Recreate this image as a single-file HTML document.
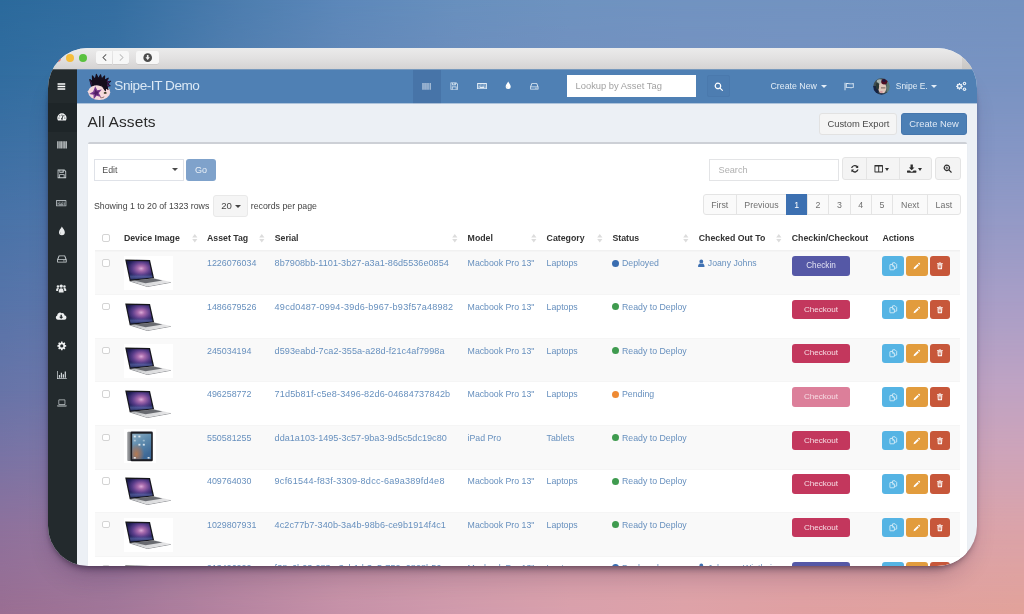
<!DOCTYPE html>
<html><head><meta charset="utf-8"><title>Snipe-IT Demo</title>
<style>
html,body{margin:0;padding:0}
body{width:1024px;height:614px;overflow:hidden;position:relative;font-family:"Liberation Sans",sans-serif;
background:#7f90c0;}
.bg{position:absolute;left:0;top:0;width:1024px;height:614px}
#shadow{position:absolute;left:49px;top:60px;width:926px;height:505px;border-radius:40px;box-shadow:0 5px 7px -1px rgba(20,10,30,.40),0 1px 4px rgba(20,10,40,.22),0 15px 24px -4px rgba(40,15,60,.20);}
#win{position:absolute;left:48px;top:48px;width:929px;height:518px;border-radius:40px;overflow:hidden;background:#ecf0f5;will-change:transform;}
.b{position:absolute;box-sizing:border-box}
.t{position:absolute;white-space:nowrap;line-height:14px;height:14px}
.t.c{text-align:center}
.ic{position:absolute;fill:currentColor;overflow:visible}
</style></head><body>
<div class="bg" style="background:linear-gradient(90deg,#2b6a9c 0.00%,#346ea1 11.13%,#4b7cae 22.27%,#5c88ba 33.40%,#6890be 44.53%,#6e93c0 55.66%,#7193c1 66.80%,#7293c1 78.12%,#7492c0 100.00%);"></div>
<div class="bg" style="background:linear-gradient(90deg,#316da0 0.00%,#3a72a4 11.13%,#527fb0 22.27%,#6388b8 33.40%,#6d8dbd 44.53%,#7390c0 55.66%,#7692c1 66.80%,#7793c2 78.12%,#7893c2 100.00%);-webkit-mask-image:linear-gradient(180deg,transparent 0px,#000 75px);mask-image:linear-gradient(180deg,transparent 0px,#000 75px);"></div>
<div class="bg" style="background:linear-gradient(90deg,#3d70a4 0.00%,#4675a8 11.13%,#5f82b4 22.27%,#6f8bbb 33.40%,#7a90c0 44.53%,#8093c3 55.66%,#8395c4 66.80%,#8496c5 78.12%,#8596c5 100.00%);-webkit-mask-image:linear-gradient(180deg,transparent 75px,#000 150px);mask-image:linear-gradient(180deg,transparent 75px,#000 150px);"></div>
<div class="bg" style="background:linear-gradient(90deg,#4a73a8 0.00%,#5478ac 11.13%,#6d85b6 22.27%,#7e8ebd 33.40%,#8a94c2 44.53%,#9097c4 55.66%,#9399c5 66.80%,#949ac6 78.12%,#959ac6 100.00%);-webkit-mask-image:linear-gradient(180deg,transparent 150px,#000 225px);mask-image:linear-gradient(180deg,transparent 150px,#000 225px);"></div>
<div class="bg" style="background:linear-gradient(90deg,#5674a9 0.00%,#6179ad 11.13%,#7d88b7 22.27%,#8f91be 33.40%,#9c98c2 44.53%,#a29bc5 55.66%,#a69dc6 66.80%,#a79ec7 78.12%,#a89ec7 100.00%);-webkit-mask-image:linear-gradient(180deg,transparent 225px,#000 300px);mask-image:linear-gradient(180deg,transparent 225px,#000 300px);"></div>
<div class="bg" style="background:linear-gradient(90deg,#6774a8 0.00%,#737aac 11.13%,#918ab5 22.27%,#a595bb 33.40%,#b39cbf 44.53%,#baa0c1 55.66%,#bda2c2 66.80%,#bfa3c3 78.12%,#c0a3c3 100.00%);-webkit-mask-image:linear-gradient(180deg,transparent 300px,#000 390px);mask-image:linear-gradient(180deg,transparent 300px,#000 390px);"></div>
<div class="bg" style="background:linear-gradient(90deg,#7a73a4 0.00%,#8579a7 11.13%,#a28aad 22.27%,#b695b2 33.40%,#c29db5 44.53%,#c9a1b7 55.66%,#cca3b7 66.80%,#cea4b8 78.12%,#cfa4b8 100.00%);-webkit-mask-image:linear-gradient(180deg,transparent 390px,#000 460px);mask-image:linear-gradient(180deg,transparent 390px,#000 460px);"></div>
<div class="bg" style="background:linear-gradient(90deg,#8e719c 0.00%,#98789e 11.13%,#b288a2 22.27%,#c494a5 33.40%,#cf9ca7 44.53%,#d6a0a8 55.66%,#d9a2a9 66.80%,#daa2a9 78.12%,#dba3a9 100.00%);-webkit-mask-image:linear-gradient(180deg,transparent 460px,#000 530px);mask-image:linear-gradient(180deg,transparent 460px,#000 530px);"></div>
<div class="bg" style="background:linear-gradient(90deg,#9a6e92 0.00%,#a27698 11.13%,#b583a0 22.27%,#c691a8 33.40%,#d09aac 44.53%,#d9a0ac 55.66%,#dea2a8 66.80%,#e0a0a2 78.12%,#e2a29a 100.00%);-webkit-mask-image:linear-gradient(180deg,transparent 530px,#000 614px);mask-image:linear-gradient(180deg,transparent 530px,#000 614px);"></div>
<div id="shadow"></div>
<div id="win">
<div class="b" style="left:0px;top:-1px;width:929.00px;height:22.00px;background:linear-gradient(180deg,#ececec 0%,#e2e1e1 50%,#d5d3d3 100%);"></div>
<div class="b" style="left:913.5px;top:-1px;width:15.50px;height:22.00px;background:linear-gradient(180deg,#dddcdb,#c9c7c5);"></div>
<div class="b" style="left:4.6px;top:5.5px;width:8.00px;height:8.00px;background:#f25e57;border-radius:50%;"></div>
<div class="b" style="left:18.4px;top:5.5px;width:8.00px;height:8.00px;background:#f5bd3b;border-radius:50%;"></div>
<div class="b" style="left:31.4px;top:5.5px;width:8.00px;height:8.00px;background:#5ac23f;border-radius:50%;"></div>
<div class="b" style="left:48px;top:3px;width:16.30px;height:13.00px;background:#f7f7f7;border-radius:2px 0 0 2px;box-shadow:0 .5px 0 rgba(0,0,0,.12);"></div>
<div class="b" style="left:65px;top:3px;width:15.50px;height:13.00px;background:#f7f7f7;border-radius:0 2px 2px 0;box-shadow:0 .5px 0 rgba(0,0,0,.12);"></div>
<div class="b" style="left:87.5px;top:3px;width:23.30px;height:13.00px;background:#f7f7f7;border-radius:2px;box-shadow:0 .5px 0 rgba(0,0,0,.12);"></div>
<svg class="ic" viewBox="0 0 10 10" style="left:52.5px;top:5px;width:8px;height:9px"><path d="M6.500 1 2.500 5l4 4" fill="none" stroke="#5e5e5e" stroke-width="1.300"/></svg>
<svg class="ic" viewBox="0 0 10 10" style="left:69px;top:5px;width:8px;height:9px"><path d="M3.500 1l4 4-4 4" fill="none" stroke="#c0c0c0" stroke-width="1.300"/></svg>
<svg class="ic" viewBox="0 0 16 16" style="left:94.70px;top:4.80px;width:9.4px;height:9.4px;color:#4c4c4c;"><circle cx="8" cy="8" r="7.400"/><path d="M6.600 3.400h2.800v4h2.400L8 11.800 4.200 7.400h2.400z" fill="#f4f4f4"/></svg>
<div class="b" style="left:0px;top:21px;width:29.20px;height:497.00px;background:#232a2d;"></div>
<div class="b" style="left:0px;top:21px;width:29.20px;height:1.00px;background:#585c5e;"></div>
<div class="b" style="left:0px;top:55px;width:29.20px;height:28.50px;background:#1e2528;"></div>
<svg class="ic" viewBox="0 0 16 16" style="left:8.50px;top:34.00px;width:8.8px;height:8.8px;color:#ffffff;"><path d="M1 2.5h14v2.6H1zM1 6.9h14v2.6H1zM1 11.3h14v2.6H1z"/></svg>
<svg class="ic" viewBox="0 0 16 16" style="left:8.60px;top:64.40px;width:9.8px;height:9.8px;color:#f2f4f5;"><path d="M8 2.2A7.6 7.6 0 0 0 .4 9.8c0 1.5.4 2.9 1.2 4.1h12.8a7.6 7.6 0 0 0 1.2-4.1A7.6 7.6 0 0 0 8 2.2zM8 4a1 1 0 1 1 0 2 1 1 0 0 1 0-2zM3.2 10.8a1 1 0 1 1 0-2 1 1 0 0 1 0 2zm1.4-3.6a1 1 0 1 1 0-2 1 1 0 0 1 0 2zm4.6 4.9a1.5 1.5 0 0 1-2.6-.9c0-.6.4-1.200 1-1.4l1.900-4.300.9.300-1.300 4.500c.4.500.5 1.200.1 1.800zm2.200-4.900a1 1 0 1 1 0-2 1 1 0 0 1 0 2zm1.400 3.600a1 1 0 1 1 0-2 1 1 0 0 1 0 2z"/></svg>
<svg class="ic" viewBox="0 0 16 16" style="left:8.60px;top:91.90px;width:9.8px;height:9.8px;color:#d5dadc;"><path d="M0 2h1.200v12H0zM1.800 2h.6v12h-.6zM3 2h1.200v12H3zM4.800 2h.6v12h-.6zM6 2h1.800v12H6zM8.400 2h.6v12h-.6zM9.600 2h1.200v12H9.600zM11.400 2h1.200v12h-1.200zM13.200 2h.6v12h-.6zM14.400 2H16v12h-1.600z"/></svg>
<svg class="ic" viewBox="0 0 16 16" style="left:8.60px;top:120.90px;width:9.8px;height:9.8px;color:#cbd1d4;"><path d="M1.500 1h10.800L15 3.700v10.800c0 .3-.2.500-.5.500h-13a.5.500 0 0 1-.5-.5v-13c0-.3.200-.5.500-.5zM2.400 2.400v11.200h1.200V8.600h8.800v5h1.200V4.300l-1.900-1.900h-.7v3.800H4V2.400zM5.400 2.400v2.400h4.200V2.400zM7.600 2.800h1.400v1.600H7.600zM5 10v3.600h6V10z" fill-rule="evenodd"/></svg>
<svg class="ic" viewBox="0 0 16 16" style="left:8.30px;top:149.50px;width:10.4px;height:10.4px;color:#aeb5b9;"><path d="M1 3.200h14c.6 0 1 .4 1 1v7.600c0 .6-.4 1-1 1H1c-.6 0-1-.4-1-1V4.200c0-.6.400-1 1-1zm.4 1.400v6.800h13.200V4.600zM2.400 5.600h1.400v1.300H2.400zm2.300 0h1.400v1.300H4.700zm2.300 0h1.400v1.300H7zm2.300 0h1.400v1.300H9.300zm2.300 0h2v1.300h-2zM2.400 7.700h2v1.300h-2zm2.900 0h1.400v1.300H5.300zm2.300 0H9v1.300H7.600zm2.300 0h1.400v1.300H9.900zm2.300 0h1.400v1.300h-1.400zM2.400 9.700h1.400V11H2.400zm2.300 0h6.600V11H4.700zm7.500 0h1.400V11h-1.400z" fill-rule="evenodd"/></svg>
<svg class="ic" viewBox="0 0 16 16" style="left:8.60px;top:177.70px;width:9.8px;height:9.8px;color:#e6e9ea;"><path d="M8 .8C6.500 4 3.200 6.800 3.200 10.400a4.800 4.800 0 0 0 9.600 0C12.800 6.800 9.500 4 8 .8z"/><path d="M6.900 13.300c-1.100-.2-1.900-1.200-1.900-2.400 0-.5.200-1 .4-1.400.4.700 1.300 1.500 1.500 3.800z" fill="#000" opacity=".18"/></svg>
<svg class="ic" viewBox="0 0 16 16" style="left:8.60px;top:206.40px;width:9.8px;height:9.8px;color:#c9cfd2;"><path d="M3.600 2.400h8.800c.5 0 .9.300 1.100.7L15.800 9v4c0 .600-.4 1-1 1H1.200c-.6 0-1-.4-1-1V9l2.300-5.900c.2-.400.600-.700 1.100-.700zM4 3.800 2.100 8.600h11.800L12 3.800zM1.600 10v2.600h12.800V10zm8.400.700h1.300v1.200H10zm2.100 0h1.300v1.200h-1.300z" fill-rule="evenodd"/></svg>
<svg class="ic" viewBox="0 0 16 16" style="left:8.30px;top:235.10px;width:10.4px;height:10.4px;color:#e6e9ea;"><path d="M8 2.200a2.600 2.600 0 1 1 0 5.200 2.600 2.600 0 0 1 0-5.200zM3 3.400a2 2 0 1 1 0 4 2 2 0 0 1 0-4zm10 0a2 2 0 1 1 0 4 2 2 0 0 1 0-4zM4.200 13.800c0-3.200 1-5.600 3.800-5.600s3.800 2.400 3.800 5.600c0 .5-.4.800-.8.800H5c-.4 0-.8-.3-.8-.8zM.2 11.200C.2 9.200 1 7.800 3 7.800c.6 0 1.100.2 1.500.4-.9 1-1.300 2.600-1.300 4.200H1c-.4 0-.8-.3-.8-.8zm15.600 0c0-2-.8-3.400-2.800-3.400-.6 0-1.100.2-1.500.4.900 1 1.300 2.600 1.300 4.200H15c.4 0 .8-.3.8-.8z"/></svg>
<svg class="ic" viewBox="0 0 16 16" style="left:8.30px;top:263.20px;width:10.4px;height:10.4px;color:#eef0f1;"><path d="M13 6.600A3.200 3.200 0 0 0 8.700 3.400 4.200 4.200 0 0 0 1.900 7 3.300 3.300 0 0 0 3.300 13.400h9.200a3.400 3.400 0 0 0 .5-6.800zM10.900 9.200 8.300 11.800c-.2.200-.4.200-.6 0L5.100 9.200c-.2-.2-.1-.5.200-.5h1.600V6.200c0-.2.200-.3.300-.3h1.600c.2 0 .3.100.3.300v2.500h1.600c.3 0 .4.300.2.500z"/></svg>
<svg class="ic" viewBox="0 0 16 16" style="left:8.60px;top:292.70px;width:9.8px;height:9.8px;color:#eef0f1;"><path d="M15 9.200V6.800l-1.900-.3a5.300 5.300 0 0 0-.5-1.200l1.100-1.500-1.700-1.700-1.500 1.100c-.4-.2-.8-.4-1.200-.5L9 .8H6.600l-.3 1.900c-.4.100-.8.300-1.200.5L3.600 2.100 1.900 3.800 3 5.300c-.2.400-.4.800-.5 1.200L.6 6.800v2.400l1.900.3c.1.400.3.800.5 1.200l-1.100 1.500 1.700 1.700 1.500-1.100c.4.200.8.400 1.200.5l.3 1.900H9l.3-1.900c.4-.1.800-.3 1.200-.5l1.500 1.100 1.700-1.700-1.100-1.500c.2-.4.400-.8.500-1.200zM7.800 10.600a2.600 2.600 0 1 1 0-5.200 2.600 2.600 0 0 1 0 5.200z"/></svg>
<svg class="ic" viewBox="0 0 16 16" style="left:8.60px;top:321.50px;width:9.8px;height:9.8px;color:#cfd5d8;"><path d="M0 1.500h1.200v12H16v1.200H0zM3 8h2v4.600H3zm3.200-3.400h2v8h-2zM9.400 7h2v5.600h-2zm3.200-4.400h2v10h-2z"/></svg>
<svg class="ic" viewBox="0 0 16 16" style="left:8.60px;top:349.60px;width:9.8px;height:9.8px;color:#c3c9cc;"><path d="M3.400 2.600h9.200c.6 0 1 .4 1 1v6.800c0 .6-.4 1-1 1H3.400c-.6 0-1-.4-1-1V3.600c0-.6.400-1 1-1zm.2 1.200v6.400h8.800V3.800zM0 12.200h16v.6c0 .500-.6.900-1.200.9H1.200c-.6 0-1.200-.4-1.200-.9z" fill-rule="evenodd"/></svg>
<div class="b" style="left:29.2px;top:21px;width:899.80px;height:34.00px;background:#4f80b4;"></div>
<div class="b" style="left:29.2px;top:21px;width:899.80px;height:1.00px;background:#7799bd;"></div>
<div class="b" style="left:29.2px;top:55px;width:899.80px;height:1.00px;background:#adc3db;"></div>
<div class="b" style="left:365px;top:22px;width:28.30px;height:33.00px;background:#4774a8;"></div>
<div class="b" style="left:365px;top:55px;width:28.30px;height:1.00px;background:#aabed6;"></div>
<svg viewBox="0 0 26 28" style="position:absolute;left:38.000px;top:24.500px;width:26px;height:28px;overflow:visible"><defs><filter id="gf" x="-10%" y="-10%" width="120%" height="120%"><feGaussianBlur stdDeviation="0.3"/></filter></defs><g filter="url(#gf)"><ellipse cx="13.200" cy="19.200" rx="11" ry="7.900" fill="#f6d9dc"/><path d="M1.200 18.600 3.600 16.800 4.200 20.200z" fill="#f6d9dc"/><path d="M5.500 13 3.800 6.500 6.600 8.600 6.400 2.800 9.200 6.600 10.400 1.400 12.400 5.800 14.600 1.800 15.600 6.200 18.600 3 18.400 7.200 22.200 5.200 20.600 8.800 24.600 8.200 21.600 11 24 12.800 21 13.200 22 16.400 19.600 14.800 19.400 17.600 16.400 13.200C13 11.200 9 11.200 5.500 13z" fill="#140c1c" stroke="#140c1c" stroke-width="1.100" stroke-linejoin="round"/><path d="M5.500 13 3.800 6.500 5.600 9.800zM22.200 5.200l-1.600 3.600 4-.6-3 2.800 2.400 1.800-3 .4z" fill="#5b2a78" opacity=".75"/><path d="M9.200 13.200 11.300 17.200 15.800 16.600 12.800 20.100 15 24 10.600 22.700 7.700 26.200 7.500 21.800 3.200 20.900 7.200 18.500z" fill="#7b3a8f"/><path d="M9.500 16.300 10.700 18.600 13.100 18.400 11.600 20.200 12.600 22.100 10.400 21.500 9 23.300 8.900 21.100 6.700 20.600 8.700 19.400z" fill="#4f1f63"/><ellipse cx="19.200" cy="19.900" rx="1.500" ry=".9" fill="#39361f"/><path d="M14.200 24.600c1.500.4 3-.1 4-.9" stroke="#5a3a3a" stroke-width=".7" fill="none"/></g></svg>

<span class="t " style="left:66.3px;top:31.20px;font-size:13.6px;color:#dbe8f5;font-weight:400;letter-spacing:-0.462px;">Snipe-IT Demo</span>
<svg class="ic" viewBox="0 0 16 16" style="left:374.40px;top:33.70px;width:8.8px;height:8.8px;color:#b9cbe0;"><path d="M0 2h1.200v12H0zM1.800 2h.6v12h-.6zM3 2h1.200v12H3zM4.800 2h.6v12h-.6zM6 2h1.800v12H6zM8.400 2h.6v12h-.6zM9.600 2h1.200v12H9.600zM11.400 2h1.200v12h-1.200zM13.200 2h.6v12h-.6zM14.400 2H16v12h-1.600z"/></svg>
<svg class="ic" viewBox="0 0 16 16" style="left:402.10px;top:34.00px;width:8.4px;height:8.4px;color:#e4edf6;"><path d="M1.500 1h10.800L15 3.700v10.800c0 .3-.2.500-.5.500h-13a.5.500 0 0 1-.5-.5v-13c0-.3.200-.5.500-.5zM2.400 2.400v11.200h1.200V8.600h8.800v5h1.200V4.300l-1.900-1.900h-.7v3.800H4V2.400zM5.400 2.400v2.400h4.200V2.400zM7.600 2.800h1.400v1.600H7.600zM5 10v3.600h6V10z" fill-rule="evenodd"/></svg>
<svg class="ic" viewBox="0 0 16 16" style="left:429.10px;top:33.30px;width:10px;height:10px;color:#e4edf6;"><path d="M1 3.200h14c.6 0 1 .4 1 1v7.600c0 .6-.4 1-1 1H1c-.6 0-1-.4-1-1V4.200c0-.6.400-1 1-1zm.4 1.400v6.800h13.200V4.600zM2.400 5.600h1.400v1.300H2.400zm2.300 0h1.400v1.300H4.700zm2.300 0h1.400v1.300H7zm2.300 0h1.400v1.300H9.300zm2.300 0h2v1.300h-2zM2.400 7.700h2v1.300h-2zm2.900 0h1.400v1.300H5.300zm2.300 0H9v1.300H7.600zm2.300 0h1.400v1.300H9.900zm2.300 0h1.400v1.300h-1.400zM2.400 9.700h1.400V11H2.400zm2.300 0h6.600V11H4.700zm7.500 0h1.400V11h-1.400z" fill-rule="evenodd"/></svg>
<svg class="ic" viewBox="0 0 16 16" style="left:456.30px;top:33.40px;width:8.4px;height:8.4px;color:#ffffff;"><path d="M8 .8C6.500 4 3.200 6.800 3.200 10.400a4.800 4.800 0 0 0 9.600 0C12.800 6.800 9.500 4 8 .8z"/><path d="M6.900 13.300c-1.100-.2-1.900-1.200-1.900-2.400 0-.5.200-1 .4-1.400.4.700 1.300 1.500 1.500 3.800z" fill="#000" opacity=".18"/></svg>
<svg class="ic" viewBox="0 0 16 16" style="left:481.70px;top:33.90px;width:8.6px;height:8.6px;color:#e4edf6;"><path d="M3.600 2.400h8.800c.5 0 .9.300 1.100.7L15.800 9v4c0 .600-.4 1-1 1H1.200c-.6 0-1-.4-1-1V9l2.300-5.900c.2-.400.600-.700 1.100-.700zM4 3.800 2.100 8.600h11.800L12 3.800zM1.600 10v2.600h12.800V10zm8.400.700h1.300v1.200H10zm2.100 0h1.300v1.200h-1.300z" fill-rule="evenodd"/></svg>
<div class="b" style="left:519px;top:27.3px;width:128.80px;height:21.50px;background:#fff;"></div>
<span class="t " style="left:527.5px;top:31.20px;font-size:9.4px;color:#a2a2a2;font-weight:400;">Lookup by Asset Tag</span>
<div class="b" style="left:659.4px;top:27.3px;width:23.00px;height:21.50px;background:#4d7db1;border:1px solid #4a79ad;border-radius:2px;"></div>
<svg class="ic" viewBox="0 0 16 16" style="left:666.10px;top:33.50px;width:9.6px;height:9.6px;color:#ffffff;"><path d="M6.600 1a5.600 5.600 0 0 1 4.600 8.800l3.500 3.500c.4.400.4 1 0 1.400-.4.400-1 .4-1.400 0l-3.500-3.500A5.600 5.600 0 1 1 6.600 1zm0 2a3.600 3.600 0 1 0 0 7.200 3.600 3.600 0 0 0 0-7.200z" fill-rule="evenodd"/></svg>
<span class="t " style="left:722.5px;top:31.20px;font-size:8.8px;color:#e3edf7;font-weight:400;">Create New</span>
<div class="b" style="left:772.6px;top:37.1px;border:3.200px solid transparent;border-top:3.600px solid #e3edf7;"></div>
<svg class="ic" viewBox="0 0 16 16" style="left:795.75px;top:33.35px;width:10.5px;height:10.5px;color:#dfeaf5;"><path d="M.8 2.600h1.500v11.400H.8zM2.900 3.600c3.500-1.500 6 1.400 11.900-.4v7.200c-5.900 1.800-8.400-1.100-11.900.4zm1.300 1v4.600c3-.8 5.600 1 9.300.3V4.900c-3.700.7-6.300-1.100-9.300-.3z" fill-rule="evenodd"/></svg>
<svg viewBox="0 0 17 17" style="position:absolute;left:824.700px;top:29.600px;width:17px;height:17px"><defs><clipPath id="ac"><circle cx="8.500" cy="8.500" r="8.300"/></clipPath><filter id="af" x="-10%" y="-10%" width="120%" height="120%"><feGaussianBlur stdDeviation="0.600"/></filter></defs><g clip-path="url(#ac)"><g filter="url(#af)"><rect x="-2" y="-2" width="21" height="21" fill="#3f4d4f"/><rect x="-1" y="8" width="6.500" height="11" fill="#182440"/><rect x="13.500" y="4" width="6" height="10" fill="#5f7a76"/><ellipse cx="6.800" cy="3.600" rx="3" ry="2.400" fill="#aab6b2"/><ellipse cx="9.300" cy="10" rx="4" ry="5.600" fill="#dfc6ba"/><ellipse cx="11.200" cy="3.800" rx="3" ry="2.700" fill="#4d0f22"/><ellipse cx="11" cy="2.600" rx="1.700" ry="1.400" fill="#1a1640"/><ellipse cx="8.200" cy="14" rx="1.700" ry="1.100" fill="#d79aa0"/><rect x="8" y="9.400" width="4.400" height="1" fill="#5f524b" opacity=".85"/><ellipse cx="9" cy="17" rx="5.500" ry="1.800" fill="#1c2a48"/><ellipse cx="4.500" cy="8" rx="1.600" ry="3.500" fill="#2c3836"/></g></g></svg>

<span class="t " style="left:847.8px;top:31.20px;font-size:8.45px;color:#e3edf7;font-weight:400;">Snipe E.</span>
<div class="b" style="left:883.3px;top:37.1px;border:3.200px solid transparent;border-top:3.600px solid #e3edf7;"></div>
<svg class="ic" viewBox="0 0 16 16" style="left:908.30px;top:32.90px;width:10.6px;height:10.6px;color:#eef3f9;"><path d="M10.200 8.900V7.300l-1.300-.2c-.1-.3-.2-.600-.4-.900l.8-1-1.200-1.200-1 .8c-.3-.2-.6-.3-.9-.4L6 3.100H4.400l-.2 1.300c-.3.100-.6.200-.9.400l-1-.8L1.100 5.200l.8 1c-.2.300-.3.600-.4.900L.2 7.300v1.600l1.300.2c.1.300.2.600.4.900l-.8 1 1.200 1.200 1-.8c.3.200.6.300.9.400l.2 1.300H6l.2-1.300c.3-.1.600-.2.900-.4l1 .8 1.200-1.200-.8-1c.2-.3.300-.6.400-.9zM5.200 10a1.900 1.900 0 1 1 0-3.800 1.900 1.900 0 0 1 0 3.800z"/><circle cx="12.800" cy="3.800" r="2.600"/><circle cx="12.800" cy="3.800" r="1" fill="#4f80b4"/><circle cx="12.800" cy="12.400" r="2.600"/><circle cx="12.800" cy="12.400" r="1" fill="#4f80b4"/></svg>
<span class="t " style="left:39.6px;top:66.90px;font-size:15.5px;color:#2a2a2a;font-weight:400;letter-spacing:0.081px;">All Assets</span>
<div class="b" style="left:771.4px;top:65.2px;width:78.10px;height:21.60px;background:#f5f5f5;border:1px solid #e2e2e2;border-radius:3px;"></div>
<span class="t c" style="left:771.4px;width:78.10px;top:69.00px;font-size:9.4px;color:#4a4a4a;font-weight:400;">Custom Export</span>
<div class="b" style="left:852.9px;top:65.2px;width:66.30px;height:21.60px;background:#4b7fb5;border:1px solid #4677ad;border-radius:3px;"></div>
<span class="t c" style="left:852.9px;width:66.30px;top:69.00px;font-size:9.4px;color:#dfe9f5;font-weight:400;">Create New</span>
<div class="b" style="left:40px;top:94.3px;width:879.00px;height:457.70px;background:#fff;border-top:2.200px solid #cdd0d6;border-radius:2px 2px 0 0;box-shadow:0 1px 1px rgba(0,0,0,.1);"></div>
<div class="b" style="left:46px;top:111.3px;width:90.00px;height:21.30px;background:#fff;border:1px solid #dfe2e8;"></div>
<span class="t " style="left:54.3px;top:115.00px;font-size:8.8px;color:#505050;font-weight:400;">Edit</span>
<div class="b" style="left:124.4px;top:120.4px;border:3px solid transparent;border-top:3.600px solid #4a4a4a;"></div>
<div class="b" style="left:138.3px;top:111.1px;width:29.30px;height:21.70px;background:#7fa2cb;border-radius:3px;"></div>
<span class="t c" style="left:138.6px;width:28.90px;top:115.00px;font-size:9px;color:#e9f0f8;font-weight:400;">Go</span>
<span class="t " style="left:46px;top:150.60px;font-size:8.75px;color:#444;font-weight:400;">Showing 1 to 20 of 1323 rows</span>
<div class="b" style="left:165px;top:147px;width:35.00px;height:21.80px;background:#f5f5f5;border:1px solid #e9e9e9;border-radius:3px;"></div>
<span class="t " style="left:173.2px;top:151.00px;font-size:9.6px;color:#444;font-weight:400;">20</span>
<div class="b" style="left:186.6px;top:156.9px;border:3.100px solid transparent;border-top:3.500px solid #444;"></div>
<span class="t " style="left:202.8px;top:150.60px;font-size:8.75px;color:#444;font-weight:400;">records per page</span>
<div class="b" style="left:661.3px;top:111.2px;width:130.00px;height:21.60px;background:#fff;border:1px solid #e3e4e6;"></div>
<span class="t " style="left:670.5px;top:115.00px;font-size:9.2px;color:#b0b0b0;font-weight:400;">Search</span>
<div class="b" style="left:794.4px;top:109.4px;width:89.20px;height:22.40px;background:#f4f4f4;border:1px solid #e4e4e4;border-radius:3px;"></div>
<div class="b" style="left:818.2px;top:109.4px;width:0.70px;height:22.40px;background:#e4e4e4;"></div>
<div class="b" style="left:850.7px;top:109.4px;width:0.70px;height:22.40px;background:#e4e4e4;"></div>
<svg class="ic" viewBox="0 0 16 16" style="left:801.80px;top:115.80px;width:9.6px;height:9.6px;color:#2f2f2f;"><path d="M13.700 2.300v4.400H9.300l1.700-1.700A4.300 4.300 0 0 0 3.900 6.700H1.700A6.400 6.400 0 0 1 12.500 3.500zM2.300 13.700V9.300h4.400L5 11a4.300 4.300 0 0 0 7.100-1.700h2.200A6.400 6.400 0 0 1 3.500 12.500z"/></svg>
<svg class="ic" viewBox="0 0 16 16" style="left:825.90px;top:115.90px;width:9.4px;height:9.4px;color:#2f2f2f;"><path d="M1.600 1.600h12.800c.5 0 .8.400.8.800v11.200c0 .5-.4.800-.8.800H1.600a.8.800 0 0 1-.8-.8V2.400c0-.5.400-.8.800-.8zm.8 2.800v8.400h4.800V4.400zm6.400 0v8.400h4.800V4.400z" fill-rule="evenodd"/></svg>
<div class="b" style="left:837.3px;top:119.5px;border:2.700px solid transparent;border-top:3.200px solid #333;"></div>
<svg class="ic" viewBox="0 0 16 16" style="left:858.60px;top:115.70px;width:9.4px;height:9.4px;color:#2f2f2f;"><path d="M6 1h4v5h2.800L8 10.800 3.200 6H6zM.8 11h4.100l1.600 1.600c.8.800 2.200.8 3 0L11.100 11h4.100c.4 0 .8.400.8.800v2.400c0 .4-.4.800-.8.800H.8a.8.800 0 0 1-.8-.8v-2.400c0-.4.400-.8.800-.8z"/></svg>
<div class="b" style="left:870px;top:119.5px;border:2.700px solid transparent;border-top:3.200px solid #333;"></div>
<div class="b" style="left:887.3px;top:109.4px;width:26.00px;height:22.40px;background:#f4f4f4;border:1px solid #e4e4e4;border-radius:3px;"></div>
<svg class="ic" viewBox="0 0 16 16" style="left:895.30px;top:115.90px;width:9.4px;height:9.4px;color:#2f2f2f;"><path d="M6.600 1a5.600 5.600 0 0 1 4.600 8.800l3.500 3.500c.4.400.4 1 0 1.400-.4.400-1 .4-1.400 0l-3.500-3.500A5.600 5.600 0 1 1 6.600 1zm0 2a3.600 3.600 0 1 0 0 7.200 3.600 3.600 0 0 0 0-7.200zM6 4.400h1.200V6h1.600v1.200H7.200v1.600H6V7.200H4.400V6H6z" fill-rule="evenodd"/></svg>
<div class="b" style="left:654.7px;top:145.8px;width:258.10px;height:21.30px;background:#fafafa;border:1px solid #e4e4e4;border-radius:3px;"></div>
<span class="t c" style="left:654.7px;width:34.00px;top:149.60px;font-size:8.8px;color:#707070;font-weight:400;">First</span>
<div class="b" style="left:688.35px;top:146px;width:0.70px;height:20.90px;background:#e4e4e4;"></div>
<span class="t c" style="left:688.7px;width:49.60px;top:149.60px;font-size:8.8px;color:#707070;font-weight:400;">Previous</span>
<div class="b" style="left:738.3px;top:146px;width:20.70px;height:20.90px;background:#3c70b1;"></div>
<span class="t c" style="left:738.3px;width:20.70px;top:149.60px;font-size:8.8px;color:#fff;font-weight:400;">1</span>
<div class="b" style="left:758.65px;top:146px;width:0.70px;height:20.90px;background:#e4e4e4;"></div>
<span class="t c" style="left:759px;width:21.80px;top:149.60px;font-size:8.8px;color:#707070;font-weight:400;">2</span>
<div class="b" style="left:780.45px;top:146px;width:0.70px;height:20.90px;background:#e4e4e4;"></div>
<span class="t c" style="left:780.8px;width:21.20px;top:149.60px;font-size:8.8px;color:#707070;font-weight:400;">3</span>
<div class="b" style="left:801.65px;top:146px;width:0.70px;height:20.90px;background:#e4e4e4;"></div>
<span class="t c" style="left:802px;width:21.30px;top:149.60px;font-size:8.8px;color:#707070;font-weight:400;">4</span>
<div class="b" style="left:822.95px;top:146px;width:0.70px;height:20.90px;background:#e4e4e4;"></div>
<span class="t c" style="left:823.3px;width:21.50px;top:149.60px;font-size:8.8px;color:#707070;font-weight:400;">5</span>
<div class="b" style="left:844.45px;top:146px;width:0.70px;height:20.90px;background:#e4e4e4;"></div>
<span class="t c" style="left:844.8px;width:34.60px;top:149.60px;font-size:8.8px;color:#707070;font-weight:400;">Next</span>
<div class="b" style="left:879.05px;top:146px;width:0.70px;height:20.90px;background:#e4e4e4;"></div>
<span class="t c" style="left:879.4px;width:33.10px;top:149.60px;font-size:8.8px;color:#707070;font-weight:400;">Last</span>
<div class="b" style="left:54px;top:186.3px;width:7.60px;height:7.70px;background:#fff;border:1px solid #d4d4d4;border-radius:2px;"></div>
<span class="t " style="left:75.9px;top:182.80px;font-size:8.75px;color:#333;font-weight:700;">Device Image</span>
<svg class="ic" viewBox="0 0 6 10" style="left:143.50px;top:184.50px;width:5.6px;height:10.4px;"><path d="M3 .4 5.800 4.200H.2zM3 9.600.2 5.800h5.600z" fill="#dcdcdc"/></svg>
<span class="t " style="left:159px;top:182.80px;font-size:8.75px;color:#333;font-weight:700;">Asset Tag</span>
<svg class="ic" viewBox="0 0 6 10" style="left:210.60px;top:184.50px;width:5.6px;height:10.4px;"><path d="M3 .4 5.800 4.200H.2zM3 9.600.2 5.800h5.600z" fill="#dcdcdc"/></svg>
<span class="t " style="left:226.7px;top:182.80px;font-size:8.75px;color:#333;font-weight:700;">Serial</span>
<svg class="ic" viewBox="0 0 6 10" style="left:404.20px;top:184.50px;width:5.6px;height:10.4px;"><path d="M3 .4 5.800 4.200H.2zM3 9.600.2 5.800h5.600z" fill="#dcdcdc"/></svg>
<span class="t " style="left:419.6px;top:182.80px;font-size:8.75px;color:#333;font-weight:700;">Model</span>
<svg class="ic" viewBox="0 0 6 10" style="left:483.20px;top:184.50px;width:5.6px;height:10.4px;"><path d="M3 .4 5.800 4.200H.2zM3 9.600.2 5.800h5.600z" fill="#dcdcdc"/></svg>
<span class="t " style="left:498.6px;top:182.80px;font-size:8.75px;color:#333;font-weight:700;">Category</span>
<svg class="ic" viewBox="0 0 6 10" style="left:549.00px;top:184.50px;width:5.6px;height:10.4px;"><path d="M3 .4 5.800 4.200H.2zM3 9.600.2 5.800h5.600z" fill="#dcdcdc"/></svg>
<span class="t " style="left:564.4px;top:182.80px;font-size:8.75px;color:#333;font-weight:700;">Status</span>
<svg class="ic" viewBox="0 0 6 10" style="left:635.40px;top:184.50px;width:5.6px;height:10.4px;"><path d="M3 .4 5.800 4.200H.2zM3 9.600.2 5.800h5.600z" fill="#dcdcdc"/></svg>
<span class="t " style="left:650.8px;top:182.80px;font-size:8.75px;color:#333;font-weight:700;">Checked Out To</span>
<svg class="ic" viewBox="0 0 6 10" style="left:727.70px;top:184.50px;width:5.6px;height:10.4px;"><path d="M3 .4 5.800 4.200H.2zM3 9.600.2 5.800h5.600z" fill="#dcdcdc"/></svg>
<span class="t " style="left:743.8px;top:182.80px;font-size:8.75px;color:#333;font-weight:700;">Checkin/Checkout</span>
<span class="t " style="left:834.4px;top:182.80px;font-size:8.75px;color:#333;font-weight:700;">Actions</span>
<div class="b" style="left:46.5px;top:202px;width:865.50px;height:1.00px;background:#f1f1f1;"></div>
<div class="b" style="left:46.5px;top:202.6px;width:865.50px;height:43.60px;background:#f9f9f9;"></div>
<div class="b" style="left:46.5px;top:202.6px;width:865.50px;height:0.70px;background:#f5f5f5;"></div>
<div class="b" style="left:54px;top:211.3px;width:7.60px;height:7.60px;background:#fff;border:1px solid #d4d4d4;border-radius:2px;"></div>
<div class="b" style="left:75.6px;top:208.3px;width:49px;height:34px;background:#fff"><svg viewBox="0 0 48.6 34" width="48.6" height="34" style="position:absolute;left:0;top:0;display:block"><defs><radialGradient id="lw" cx="0.56" cy="0.40" r="0.60"><stop offset="0" stop-color="#d9a9d6"/><stop offset="0.22" stop-color="#a96cae"/><stop offset="0.55" stop-color="#5d3f8c"/><stop offset="0.85" stop-color="#2b2562"/><stop offset="1" stop-color="#1a1a48"/></radialGradient><linearGradient id="lb" x1="0" y1="0" x2="1" y2="0.3"><stop offset="0" stop-color="#a2a4a8"/><stop offset="0.5" stop-color="#d6d7d9"/><stop offset="1" stop-color="#e6e6e7"/></linearGradient><linearGradient id="lg" x1="0" y1="0" x2="0" y2="1"><stop offset="0.7" stop-color="#4a6aa8" stop-opacity="0"/><stop offset="0.85" stop-color="#6b7fc0" stop-opacity="0.55"/><stop offset="1" stop-color="#3a4a80" stop-opacity="0.5"/></linearGradient><filter id="lf" x="-5%" y="-5%" width="110%" height="110%"><feGaussianBlur stdDeviation="0.38"/></filter></defs><g filter="url(#lf)"><path d="M5.700 25.500 23.400 31.100 46.800 26.800 46.800 26 23.300 30.200 5.700 24.600z" fill="#8d8f93"/><path d="M5.700 24.700 23.300 30.200 46.800 26 30.200 22.300z" fill="url(#lb)"/><path d="M10.500 24.500 29.600 22.500 38.500 24.500 21.500 27.300z" fill="#4e5056" opacity="0.8"/><path d="M1.200 3.600 26 3.900 30.100 22.300 5.700 24.900z" fill="#15151b"/><path d="M2.700 5.100 25 5.300 28.600 21.400 6.600 23.600z" fill="url(#lw)"/><path d="M2.700 5.100 25 5.300 28.600 21.400 6.600 23.600z" fill="url(#lg)"/></g></svg>
</div>
<span class="t " style="left:159px;top:208.30px;font-size:8.9px;color:#6790be;font-weight:400;">1226076034</span>
<span class="t " style="left:226.6px;top:208.30px;font-size:9.1px;color:#6790be;font-weight:400;letter-spacing:0.028px;">8b7908bb-1101-3b27-a3a1-86d5536e0854</span>
<span class="t " style="left:419.6px;top:208.30px;font-size:8.75px;color:#6790be;font-weight:400;">Macbook Pro 13&quot;</span>
<span class="t " style="left:498.6px;top:208.30px;font-size:8.75px;color:#6790be;font-weight:400;">Laptops</span>
<div class="b" style="left:564.3px;top:211.7px;width:7.00px;height:7.00px;background:#3a6db0;border-radius:50%;"></div>
<span class="t " style="left:574px;top:208.30px;font-size:8.75px;color:#6790be;font-weight:400;">Deployed</span>
<svg class="ic" viewBox="0 0 16 16" style="left:649.40px;top:210.60px;width:8.6px;height:8.6px;color:#3f71b2;"><path d="M8 1a3.600 3.600 0 1 1 0 7.200A3.600 3.600 0 0 1 8 1zM2 14.200c0-3.400 1.500-5.600 3.600-5.800.7.500 1.500.8 2.400.8s1.700-.3 2.400-.8c2.100.2 3.600 2.400 3.600 5.800 0 .5-.4.800-.8.800H2.800c-.4 0-.8-.3-.8-.8z"/></svg>
<span class="t " style="left:659.8px;top:208.30px;font-size:8.7px;color:#6790be;font-weight:400;">Joany Johns</span>
<div class="b" style="left:743.8px;top:208.3px;width:58.40px;height:19.60px;background:#5558a6;border-radius:3px;"></div>
<span class="t c" style="left:743.8px;width:58.40px;top:211.10px;font-size:8.2px;color:#e2e2f3;font-weight:400;">Checkin</span>
<div class="b" style="left:834px;top:208.3px;width:22.10px;height:19.60px;background:#55b4e4;border-radius:3px;"></div>
<svg class="ic" viewBox="0 0 16 16" style="left:840.75px;top:213.80px;width:8.6px;height:8.6px;color:#ffffff;"><g fill="none" stroke="currentColor" stroke-width="1.250" stroke-linejoin="round"><path d="M6.400 4V2.200c0-.4.300-.7.700-.7h4.200l3 3v6.300c0 .4-.3.700-.7.700H10"/><path d="M2.400 4.600h4.400l3.200 3.200v6c0 .4-.3.700-.7.700H2.400c-.4 0-.7-.3-.7-.7V5.300c0-.4.300-.7.700-.7z"/><path d="M6.600 4.800V8h3.200" stroke-width="1"/></g></svg>
<div class="b" style="left:858.3px;top:208.3px;width:21.30px;height:19.60px;background:#e29c3d;border-radius:3px;"></div>
<svg class="ic" viewBox="0 0 16 16" style="left:865.05px;top:214.20px;width:7.8px;height:7.8px;color:#ffffff;"><path d="M11.600 1.600c.4-.4 1-.4 1.400 0l1.400 1.400c.4.400.4 1 0 1.400L13 5.800 10.200 3zM9.300 3.900l2.800 2.800-7.300 7.300-3.600.8.800-3.600z"/></svg>
<div class="b" style="left:881.9px;top:208.3px;width:20.60px;height:19.60px;background:#c7573a;border-radius:3px;"></div>
<svg class="ic" viewBox="0 0 16 16" style="left:888.30px;top:214.20px;width:7.8px;height:7.8px;color:#ffffff;"><path d="M6 1h4l.6 1.200H14v1.600H2V2.200h3.400zM3 4.800h10l-.7 9.400c0 .5-.4.800-.9.800H4.600c-.5 0-.9-.3-.9-.8zm2.300 1.700.3 6.400h1.200l-.2-6.400zm2.100 0v6.400h1.200V6.500zm2.100 0-.2 6.400h1.200l.3-6.400z" fill-rule="evenodd"/></svg>
<div class="b" style="left:46.5px;top:246.2px;width:865.50px;height:0.70px;background:#f5f5f5;"></div>
<div class="b" style="left:54px;top:254.9px;width:7.60px;height:7.60px;background:#fff;border:1px solid #d4d4d4;border-radius:2px;"></div>
<div class="b" style="left:75.6px;top:251.9px;width:49px;height:34px;background:#fff"><svg viewBox="0 0 48.6 34" width="48.6" height="34" style="position:absolute;left:0;top:0;display:block"><defs><radialGradient id="lw" cx="0.56" cy="0.40" r="0.60"><stop offset="0" stop-color="#d9a9d6"/><stop offset="0.22" stop-color="#a96cae"/><stop offset="0.55" stop-color="#5d3f8c"/><stop offset="0.85" stop-color="#2b2562"/><stop offset="1" stop-color="#1a1a48"/></radialGradient><linearGradient id="lb" x1="0" y1="0" x2="1" y2="0.3"><stop offset="0" stop-color="#a2a4a8"/><stop offset="0.5" stop-color="#d6d7d9"/><stop offset="1" stop-color="#e6e6e7"/></linearGradient><linearGradient id="lg" x1="0" y1="0" x2="0" y2="1"><stop offset="0.7" stop-color="#4a6aa8" stop-opacity="0"/><stop offset="0.85" stop-color="#6b7fc0" stop-opacity="0.55"/><stop offset="1" stop-color="#3a4a80" stop-opacity="0.5"/></linearGradient><filter id="lf" x="-5%" y="-5%" width="110%" height="110%"><feGaussianBlur stdDeviation="0.38"/></filter></defs><g filter="url(#lf)"><path d="M5.700 25.500 23.400 31.100 46.800 26.800 46.800 26 23.300 30.200 5.700 24.600z" fill="#8d8f93"/><path d="M5.700 24.700 23.300 30.200 46.800 26 30.200 22.300z" fill="url(#lb)"/><path d="M10.500 24.500 29.600 22.500 38.500 24.500 21.500 27.300z" fill="#4e5056" opacity="0.8"/><path d="M1.200 3.600 26 3.900 30.100 22.300 5.700 24.900z" fill="#15151b"/><path d="M2.700 5.100 25 5.300 28.600 21.400 6.600 23.600z" fill="url(#lw)"/><path d="M2.700 5.100 25 5.300 28.600 21.400 6.600 23.600z" fill="url(#lg)"/></g></svg>
</div>
<span class="t " style="left:159px;top:251.90px;font-size:8.9px;color:#6790be;font-weight:400;">1486679526</span>
<span class="t " style="left:226.6px;top:251.90px;font-size:9.1px;color:#6790be;font-weight:400;letter-spacing:0.218px;">49cd0487-0994-39d6-b967-b93f57a48982</span>
<span class="t " style="left:419.6px;top:251.90px;font-size:8.75px;color:#6790be;font-weight:400;">Macbook Pro 13&quot;</span>
<span class="t " style="left:498.6px;top:251.90px;font-size:8.75px;color:#6790be;font-weight:400;">Laptops</span>
<div class="b" style="left:564.3px;top:255.3px;width:7.00px;height:7.00px;background:#3f9b4f;border-radius:50%;"></div>
<span class="t " style="left:574px;top:251.90px;font-size:8.75px;color:#6790be;font-weight:400;">Ready to Deploy</span>
<div class="b" style="left:743.8px;top:251.9px;width:58.40px;height:19.60px;background:#c3375d;border-radius:3px;"></div>
<span class="t c" style="left:743.8px;width:58.40px;top:254.70px;font-size:8.1px;color:#f6dbe3;font-weight:400;">Checkout</span>
<div class="b" style="left:834px;top:251.9px;width:22.10px;height:19.60px;background:#55b4e4;border-radius:3px;"></div>
<svg class="ic" viewBox="0 0 16 16" style="left:840.75px;top:257.40px;width:8.6px;height:8.6px;color:#ffffff;"><g fill="none" stroke="currentColor" stroke-width="1.250" stroke-linejoin="round"><path d="M6.400 4V2.200c0-.4.300-.7.700-.7h4.200l3 3v6.300c0 .4-.3.700-.7.700H10"/><path d="M2.400 4.600h4.400l3.200 3.200v6c0 .4-.3.700-.7.700H2.400c-.4 0-.7-.3-.7-.7V5.300c0-.4.300-.7.700-.7z"/><path d="M6.600 4.800V8h3.200" stroke-width="1"/></g></svg>
<div class="b" style="left:858.3px;top:251.9px;width:21.30px;height:19.60px;background:#e29c3d;border-radius:3px;"></div>
<svg class="ic" viewBox="0 0 16 16" style="left:865.05px;top:257.80px;width:7.8px;height:7.8px;color:#ffffff;"><path d="M11.600 1.600c.4-.4 1-.4 1.400 0l1.400 1.400c.4.400.4 1 0 1.400L13 5.800 10.200 3zM9.300 3.900l2.800 2.800-7.300 7.300-3.600.8.800-3.600z"/></svg>
<div class="b" style="left:881.9px;top:251.9px;width:20.60px;height:19.60px;background:#c7573a;border-radius:3px;"></div>
<svg class="ic" viewBox="0 0 16 16" style="left:888.30px;top:257.80px;width:7.8px;height:7.8px;color:#ffffff;"><path d="M6 1h4l.6 1.200H14v1.600H2V2.200h3.400zM3 4.800h10l-.7 9.400c0 .5-.4.800-.9.800H4.600c-.5 0-.9-.3-.9-.8zm2.300 1.700.3 6.400h1.200l-.2-6.400zm2.100 0v6.400h1.200V6.500zm2.100 0-.2 6.400h1.200l.3-6.400z" fill-rule="evenodd"/></svg>
<div class="b" style="left:46.5px;top:289.8px;width:865.50px;height:43.60px;background:#f9f9f9;"></div>
<div class="b" style="left:46.5px;top:289.8px;width:865.50px;height:0.70px;background:#f5f5f5;"></div>
<div class="b" style="left:54px;top:298.5px;width:7.60px;height:7.60px;background:#fff;border:1px solid #d4d4d4;border-radius:2px;"></div>
<div class="b" style="left:75.6px;top:295.5px;width:49px;height:34px;background:#fff"><svg viewBox="0 0 48.6 34" width="48.6" height="34" style="position:absolute;left:0;top:0;display:block"><defs><radialGradient id="lw" cx="0.56" cy="0.40" r="0.60"><stop offset="0" stop-color="#d9a9d6"/><stop offset="0.22" stop-color="#a96cae"/><stop offset="0.55" stop-color="#5d3f8c"/><stop offset="0.85" stop-color="#2b2562"/><stop offset="1" stop-color="#1a1a48"/></radialGradient><linearGradient id="lb" x1="0" y1="0" x2="1" y2="0.3"><stop offset="0" stop-color="#a2a4a8"/><stop offset="0.5" stop-color="#d6d7d9"/><stop offset="1" stop-color="#e6e6e7"/></linearGradient><linearGradient id="lg" x1="0" y1="0" x2="0" y2="1"><stop offset="0.7" stop-color="#4a6aa8" stop-opacity="0"/><stop offset="0.85" stop-color="#6b7fc0" stop-opacity="0.55"/><stop offset="1" stop-color="#3a4a80" stop-opacity="0.5"/></linearGradient><filter id="lf" x="-5%" y="-5%" width="110%" height="110%"><feGaussianBlur stdDeviation="0.38"/></filter></defs><g filter="url(#lf)"><path d="M5.700 25.500 23.400 31.100 46.800 26.800 46.800 26 23.300 30.200 5.700 24.600z" fill="#8d8f93"/><path d="M5.700 24.700 23.300 30.200 46.800 26 30.200 22.300z" fill="url(#lb)"/><path d="M10.500 24.500 29.600 22.500 38.500 24.500 21.500 27.300z" fill="#4e5056" opacity="0.8"/><path d="M1.200 3.600 26 3.900 30.100 22.300 5.700 24.900z" fill="#15151b"/><path d="M2.700 5.100 25 5.300 28.600 21.400 6.600 23.600z" fill="url(#lw)"/><path d="M2.700 5.100 25 5.300 28.600 21.400 6.600 23.600z" fill="url(#lg)"/></g></svg>
</div>
<span class="t " style="left:159px;top:295.50px;font-size:8.9px;color:#6790be;font-weight:400;">245034194</span>
<span class="t " style="left:226.6px;top:295.50px;font-size:9.1px;color:#6790be;font-weight:400;letter-spacing:0.059px;">d593eabd-7ca2-355a-a28d-f21c4af7998a</span>
<span class="t " style="left:419.6px;top:295.50px;font-size:8.75px;color:#6790be;font-weight:400;">Macbook Pro 13&quot;</span>
<span class="t " style="left:498.6px;top:295.50px;font-size:8.75px;color:#6790be;font-weight:400;">Laptops</span>
<div class="b" style="left:564.3px;top:298.9px;width:7.00px;height:7.00px;background:#3f9b4f;border-radius:50%;"></div>
<span class="t " style="left:574px;top:295.50px;font-size:8.75px;color:#6790be;font-weight:400;">Ready to Deploy</span>
<div class="b" style="left:743.8px;top:295.5px;width:58.40px;height:19.60px;background:#c3375d;border-radius:3px;"></div>
<span class="t c" style="left:743.8px;width:58.40px;top:298.30px;font-size:8.1px;color:#f6dbe3;font-weight:400;">Checkout</span>
<div class="b" style="left:834px;top:295.5px;width:22.10px;height:19.60px;background:#55b4e4;border-radius:3px;"></div>
<svg class="ic" viewBox="0 0 16 16" style="left:840.75px;top:301.00px;width:8.6px;height:8.6px;color:#ffffff;"><g fill="none" stroke="currentColor" stroke-width="1.250" stroke-linejoin="round"><path d="M6.400 4V2.200c0-.4.300-.7.700-.7h4.200l3 3v6.300c0 .4-.3.700-.7.700H10"/><path d="M2.400 4.600h4.400l3.200 3.200v6c0 .4-.3.700-.7.700H2.400c-.4 0-.7-.3-.7-.7V5.300c0-.4.300-.7.700-.7z"/><path d="M6.600 4.800V8h3.200" stroke-width="1"/></g></svg>
<div class="b" style="left:858.3px;top:295.5px;width:21.30px;height:19.60px;background:#e29c3d;border-radius:3px;"></div>
<svg class="ic" viewBox="0 0 16 16" style="left:865.05px;top:301.40px;width:7.8px;height:7.8px;color:#ffffff;"><path d="M11.600 1.600c.4-.4 1-.4 1.400 0l1.400 1.400c.4.400.4 1 0 1.400L13 5.800 10.200 3zM9.300 3.900l2.800 2.800-7.300 7.300-3.600.8.800-3.600z"/></svg>
<div class="b" style="left:881.9px;top:295.5px;width:20.60px;height:19.60px;background:#c7573a;border-radius:3px;"></div>
<svg class="ic" viewBox="0 0 16 16" style="left:888.30px;top:301.40px;width:7.8px;height:7.8px;color:#ffffff;"><path d="M6 1h4l.6 1.200H14v1.600H2V2.200h3.400zM3 4.800h10l-.7 9.400c0 .5-.4.800-.9.800H4.600c-.5 0-.9-.3-.9-.8zm2.300 1.700.3 6.400h1.200l-.2-6.400zm2.100 0v6.400h1.200V6.500zm2.100 0-.2 6.400h1.200l.3-6.400z" fill-rule="evenodd"/></svg>
<div class="b" style="left:46.5px;top:333.4px;width:865.50px;height:0.70px;background:#f5f5f5;"></div>
<div class="b" style="left:54px;top:342.1px;width:7.60px;height:7.60px;background:#fff;border:1px solid #d4d4d4;border-radius:2px;"></div>
<div class="b" style="left:75.6px;top:339.1px;width:49px;height:34px;background:#fff"><svg viewBox="0 0 48.6 34" width="48.6" height="34" style="position:absolute;left:0;top:0;display:block"><defs><radialGradient id="lw" cx="0.56" cy="0.40" r="0.60"><stop offset="0" stop-color="#d9a9d6"/><stop offset="0.22" stop-color="#a96cae"/><stop offset="0.55" stop-color="#5d3f8c"/><stop offset="0.85" stop-color="#2b2562"/><stop offset="1" stop-color="#1a1a48"/></radialGradient><linearGradient id="lb" x1="0" y1="0" x2="1" y2="0.3"><stop offset="0" stop-color="#a2a4a8"/><stop offset="0.5" stop-color="#d6d7d9"/><stop offset="1" stop-color="#e6e6e7"/></linearGradient><linearGradient id="lg" x1="0" y1="0" x2="0" y2="1"><stop offset="0.7" stop-color="#4a6aa8" stop-opacity="0"/><stop offset="0.85" stop-color="#6b7fc0" stop-opacity="0.55"/><stop offset="1" stop-color="#3a4a80" stop-opacity="0.5"/></linearGradient><filter id="lf" x="-5%" y="-5%" width="110%" height="110%"><feGaussianBlur stdDeviation="0.38"/></filter></defs><g filter="url(#lf)"><path d="M5.700 25.500 23.400 31.100 46.800 26.800 46.800 26 23.300 30.200 5.700 24.600z" fill="#8d8f93"/><path d="M5.700 24.700 23.300 30.200 46.800 26 30.200 22.300z" fill="url(#lb)"/><path d="M10.500 24.500 29.600 22.500 38.500 24.500 21.500 27.300z" fill="#4e5056" opacity="0.8"/><path d="M1.200 3.600 26 3.900 30.100 22.300 5.700 24.900z" fill="#15151b"/><path d="M2.700 5.100 25 5.300 28.600 21.400 6.600 23.600z" fill="url(#lw)"/><path d="M2.700 5.100 25 5.300 28.600 21.400 6.600 23.600z" fill="url(#lg)"/></g></svg>
</div>
<span class="t " style="left:159px;top:339.10px;font-size:8.9px;color:#6790be;font-weight:400;">496258772</span>
<span class="t " style="left:226.6px;top:339.10px;font-size:9.1px;color:#6790be;font-weight:400;letter-spacing:0.132px;">71d5b81f-c5e8-3496-82d6-04684737842b</span>
<span class="t " style="left:419.6px;top:339.10px;font-size:8.75px;color:#6790be;font-weight:400;">Macbook Pro 13&quot;</span>
<span class="t " style="left:498.6px;top:339.10px;font-size:8.75px;color:#6790be;font-weight:400;">Laptops</span>
<div class="b" style="left:564.3px;top:342.5px;width:7.00px;height:7.00px;background:#ee8a33;border-radius:50%;"></div>
<span class="t " style="left:574px;top:339.10px;font-size:8.75px;color:#6790be;font-weight:400;">Pending</span>
<div class="b" style="left:743.8px;top:339.1px;width:58.40px;height:19.60px;background:#dc7f9a;border-radius:3px;"></div>
<span class="t c" style="left:743.8px;width:58.40px;top:341.90px;font-size:8.1px;color:#f6dbe3;font-weight:400;">Checkout</span>
<div class="b" style="left:834px;top:339.1px;width:22.10px;height:19.60px;background:#55b4e4;border-radius:3px;"></div>
<svg class="ic" viewBox="0 0 16 16" style="left:840.75px;top:344.60px;width:8.6px;height:8.6px;color:#ffffff;"><g fill="none" stroke="currentColor" stroke-width="1.250" stroke-linejoin="round"><path d="M6.400 4V2.200c0-.4.300-.7.700-.7h4.200l3 3v6.300c0 .4-.3.700-.7.700H10"/><path d="M2.400 4.600h4.400l3.200 3.200v6c0 .4-.3.700-.7.700H2.400c-.4 0-.7-.3-.7-.7V5.300c0-.4.300-.7.700-.7z"/><path d="M6.600 4.800V8h3.200" stroke-width="1"/></g></svg>
<div class="b" style="left:858.3px;top:339.1px;width:21.30px;height:19.60px;background:#e29c3d;border-radius:3px;"></div>
<svg class="ic" viewBox="0 0 16 16" style="left:865.05px;top:345.00px;width:7.8px;height:7.8px;color:#ffffff;"><path d="M11.600 1.600c.4-.4 1-.4 1.400 0l1.400 1.400c.4.400.4 1 0 1.400L13 5.800 10.200 3zM9.300 3.900l2.800 2.800-7.300 7.300-3.600.8.800-3.600z"/></svg>
<div class="b" style="left:881.9px;top:339.1px;width:20.60px;height:19.60px;background:#c7573a;border-radius:3px;"></div>
<svg class="ic" viewBox="0 0 16 16" style="left:888.30px;top:345.00px;width:7.8px;height:7.8px;color:#ffffff;"><path d="M6 1h4l.6 1.200H14v1.600H2V2.200h3.400zM3 4.800h10l-.7 9.400c0 .5-.4.800-.9.800H4.600c-.5 0-.9-.3-.9-.8zm2.300 1.700.3 6.400h1.200l-.2-6.400zm2.100 0v6.400h1.200V6.500zm2.100 0-.2 6.400h1.200l.3-6.400z" fill-rule="evenodd"/></svg>
<div class="b" style="left:46.5px;top:377.0px;width:865.50px;height:43.60px;background:#f9f9f9;"></div>
<div class="b" style="left:46.5px;top:377.0px;width:865.50px;height:0.70px;background:#f5f5f5;"></div>
<div class="b" style="left:54px;top:385.7px;width:7.60px;height:7.60px;background:#fff;border:1px solid #d4d4d4;border-radius:2px;"></div>
<div class="b" style="left:76.1px;top:381.3px;width:32.3px;height:34px;background:#fff"><svg viewBox="0 0 32.3 34" width="32.3" height="34" style="position:absolute;left:0;top:0;display:block"><defs><linearGradient id="ps" x1="0" y1="0" x2="0.5" y2="1"><stop offset="0" stop-color="#90afc4"/><stop offset="0.45" stop-color="#5f8cae"/><stop offset="1" stop-color="#3c6796"/></linearGradient><radialGradient id="po" cx="0.22" cy="0.80" r="0.42"><stop offset="0" stop-color="#c87a42" stop-opacity="0.85"/><stop offset="0.6" stop-color="#b7744e" stop-opacity="0.45"/><stop offset="1" stop-color="#b7744e" stop-opacity="0"/></radialGradient><linearGradient id="pg" x1="0" y1="0" x2="1" y2="0"><stop offset="0" stop-color="#a4a6a9"/><stop offset="1" stop-color="#5d5f64"/></linearGradient><filter id="pf" x="-5%" y="-5%" width="110%" height="110%"><feGaussianBlur stdDeviation="0.35"/></filter></defs><g filter="url(#pf)"><rect x="3.200" y="2.800" width="5" height="29.300" rx="1" fill="url(#pg)"/><rect x="6.600" y="2.600" width="22.200" height="29.700" rx="1.300" fill="#1b1c20"/><rect x="8.200" y="4.700" width="19" height="25.500" fill="url(#ps)"/><rect x="8.200" y="4.700" width="19" height="25.500" fill="url(#po)"/><g fill="#eef4f8" opacity="0.85"><rect x="9.800" y="6.600" width="2" height="1.800"/><rect x="14.400" y="6.600" width="2" height="1.800"/><rect x="9.800" y="10.800" width="2" height="1.600" opacity="0.6"/><rect x="14.400" y="14.800" width="2" height="1.800"/><rect x="18.800" y="14.800" width="2" height="1.800"/><rect x="9.800" y="28" width="2" height="1.600"/><rect x="23.600" y="28" width="2" height="1.600"/><rect x="18.800" y="10.800" width="2" height="1.600" opacity="0.5"/></g></g></svg>
</div>
<span class="t " style="left:159px;top:382.70px;font-size:8.9px;color:#6790be;font-weight:400;">550581255</span>
<span class="t " style="left:226.6px;top:382.70px;font-size:9.1px;color:#6790be;font-weight:400;letter-spacing:0.007px;">dda1a103-1495-3c57-9ba3-9d5c5dc19c80</span>
<span class="t " style="left:419.6px;top:382.70px;font-size:8.75px;color:#6790be;font-weight:400;">iPad Pro</span>
<span class="t " style="left:498.6px;top:382.70px;font-size:8.75px;color:#6790be;font-weight:400;">Tablets</span>
<div class="b" style="left:564.3px;top:386.1px;width:7.00px;height:7.00px;background:#3f9b4f;border-radius:50%;"></div>
<span class="t " style="left:574px;top:382.70px;font-size:8.75px;color:#6790be;font-weight:400;">Ready to Deploy</span>
<div class="b" style="left:743.8px;top:382.7px;width:58.40px;height:19.60px;background:#c3375d;border-radius:3px;"></div>
<span class="t c" style="left:743.8px;width:58.40px;top:385.50px;font-size:8.1px;color:#f6dbe3;font-weight:400;">Checkout</span>
<div class="b" style="left:834px;top:382.7px;width:22.10px;height:19.60px;background:#55b4e4;border-radius:3px;"></div>
<svg class="ic" viewBox="0 0 16 16" style="left:840.75px;top:388.20px;width:8.6px;height:8.6px;color:#ffffff;"><g fill="none" stroke="currentColor" stroke-width="1.250" stroke-linejoin="round"><path d="M6.400 4V2.200c0-.4.300-.7.700-.7h4.200l3 3v6.300c0 .4-.3.700-.7.700H10"/><path d="M2.400 4.600h4.400l3.200 3.200v6c0 .4-.3.700-.7.700H2.400c-.4 0-.7-.3-.7-.7V5.300c0-.4.300-.7.700-.7z"/><path d="M6.600 4.800V8h3.200" stroke-width="1"/></g></svg>
<div class="b" style="left:858.3px;top:382.7px;width:21.30px;height:19.60px;background:#e29c3d;border-radius:3px;"></div>
<svg class="ic" viewBox="0 0 16 16" style="left:865.05px;top:388.60px;width:7.8px;height:7.8px;color:#ffffff;"><path d="M11.600 1.600c.4-.4 1-.4 1.400 0l1.400 1.400c.4.400.4 1 0 1.400L13 5.800 10.200 3zM9.300 3.900l2.800 2.800-7.300 7.300-3.600.8.800-3.600z"/></svg>
<div class="b" style="left:881.9px;top:382.7px;width:20.60px;height:19.60px;background:#c7573a;border-radius:3px;"></div>
<svg class="ic" viewBox="0 0 16 16" style="left:888.30px;top:388.60px;width:7.8px;height:7.8px;color:#ffffff;"><path d="M6 1h4l.6 1.200H14v1.600H2V2.200h3.400zM3 4.800h10l-.7 9.400c0 .5-.4.800-.9.800H4.600c-.5 0-.9-.3-.9-.8zm2.300 1.700.3 6.400h1.200l-.2-6.400zm2.100 0v6.400h1.200V6.500zm2.100 0-.2 6.400h1.200l.3-6.400z" fill-rule="evenodd"/></svg>
<div class="b" style="left:46.5px;top:420.6px;width:865.50px;height:0.70px;background:#f5f5f5;"></div>
<div class="b" style="left:54px;top:429.3px;width:7.60px;height:7.60px;background:#fff;border:1px solid #d4d4d4;border-radius:2px;"></div>
<div class="b" style="left:75.6px;top:426.3px;width:49px;height:34px;background:#fff"><svg viewBox="0 0 48.6 34" width="48.6" height="34" style="position:absolute;left:0;top:0;display:block"><defs><radialGradient id="lw" cx="0.56" cy="0.40" r="0.60"><stop offset="0" stop-color="#d9a9d6"/><stop offset="0.22" stop-color="#a96cae"/><stop offset="0.55" stop-color="#5d3f8c"/><stop offset="0.85" stop-color="#2b2562"/><stop offset="1" stop-color="#1a1a48"/></radialGradient><linearGradient id="lb" x1="0" y1="0" x2="1" y2="0.3"><stop offset="0" stop-color="#a2a4a8"/><stop offset="0.5" stop-color="#d6d7d9"/><stop offset="1" stop-color="#e6e6e7"/></linearGradient><linearGradient id="lg" x1="0" y1="0" x2="0" y2="1"><stop offset="0.7" stop-color="#4a6aa8" stop-opacity="0"/><stop offset="0.85" stop-color="#6b7fc0" stop-opacity="0.55"/><stop offset="1" stop-color="#3a4a80" stop-opacity="0.5"/></linearGradient><filter id="lf" x="-5%" y="-5%" width="110%" height="110%"><feGaussianBlur stdDeviation="0.38"/></filter></defs><g filter="url(#lf)"><path d="M5.700 25.500 23.400 31.100 46.800 26.800 46.800 26 23.300 30.200 5.700 24.600z" fill="#8d8f93"/><path d="M5.700 24.700 23.300 30.200 46.800 26 30.200 22.300z" fill="url(#lb)"/><path d="M10.500 24.500 29.600 22.500 38.500 24.500 21.500 27.300z" fill="#4e5056" opacity="0.8"/><path d="M1.200 3.600 26 3.900 30.100 22.300 5.700 24.900z" fill="#15151b"/><path d="M2.700 5.100 25 5.300 28.600 21.400 6.600 23.600z" fill="url(#lw)"/><path d="M2.700 5.100 25 5.300 28.600 21.400 6.600 23.600z" fill="url(#lg)"/></g></svg>
</div>
<span class="t " style="left:159px;top:426.30px;font-size:8.9px;color:#6790be;font-weight:400;">409764030</span>
<span class="t " style="left:226.6px;top:426.30px;font-size:9.1px;color:#6790be;font-weight:400;letter-spacing:0.216px;">9cf61544-f83f-3309-8dcc-6a9a389fd4e8</span>
<span class="t " style="left:419.6px;top:426.30px;font-size:8.75px;color:#6790be;font-weight:400;">Macbook Pro 13&quot;</span>
<span class="t " style="left:498.6px;top:426.30px;font-size:8.75px;color:#6790be;font-weight:400;">Laptops</span>
<div class="b" style="left:564.3px;top:429.7px;width:7.00px;height:7.00px;background:#3f9b4f;border-radius:50%;"></div>
<span class="t " style="left:574px;top:426.30px;font-size:8.75px;color:#6790be;font-weight:400;">Ready to Deploy</span>
<div class="b" style="left:743.8px;top:426.3px;width:58.40px;height:19.60px;background:#c3375d;border-radius:3px;"></div>
<span class="t c" style="left:743.8px;width:58.40px;top:429.10px;font-size:8.1px;color:#f6dbe3;font-weight:400;">Checkout</span>
<div class="b" style="left:834px;top:426.3px;width:22.10px;height:19.60px;background:#55b4e4;border-radius:3px;"></div>
<svg class="ic" viewBox="0 0 16 16" style="left:840.75px;top:431.80px;width:8.6px;height:8.6px;color:#ffffff;"><g fill="none" stroke="currentColor" stroke-width="1.250" stroke-linejoin="round"><path d="M6.400 4V2.200c0-.4.300-.7.700-.7h4.200l3 3v6.300c0 .4-.3.700-.7.700H10"/><path d="M2.400 4.600h4.400l3.200 3.200v6c0 .4-.3.700-.7.700H2.400c-.4 0-.7-.3-.7-.7V5.300c0-.4.300-.7.700-.7z"/><path d="M6.600 4.800V8h3.200" stroke-width="1"/></g></svg>
<div class="b" style="left:858.3px;top:426.3px;width:21.30px;height:19.60px;background:#e29c3d;border-radius:3px;"></div>
<svg class="ic" viewBox="0 0 16 16" style="left:865.05px;top:432.20px;width:7.8px;height:7.8px;color:#ffffff;"><path d="M11.600 1.600c.4-.4 1-.4 1.400 0l1.400 1.400c.4.400.4 1 0 1.400L13 5.800 10.200 3zM9.300 3.900l2.800 2.800-7.300 7.300-3.600.8.800-3.600z"/></svg>
<div class="b" style="left:881.9px;top:426.3px;width:20.60px;height:19.60px;background:#c7573a;border-radius:3px;"></div>
<svg class="ic" viewBox="0 0 16 16" style="left:888.30px;top:432.20px;width:7.8px;height:7.8px;color:#ffffff;"><path d="M6 1h4l.6 1.200H14v1.600H2V2.200h3.400zM3 4.800h10l-.7 9.400c0 .5-.4.800-.9.800H4.600c-.5 0-.9-.3-.9-.8zm2.300 1.700.3 6.400h1.200l-.2-6.400zm2.100 0v6.400h1.200V6.500zm2.100 0-.2 6.400h1.200l.3-6.400z" fill-rule="evenodd"/></svg>
<div class="b" style="left:46.5px;top:464.2px;width:865.50px;height:43.60px;background:#f9f9f9;"></div>
<div class="b" style="left:46.5px;top:464.2px;width:865.50px;height:0.70px;background:#f5f5f5;"></div>
<div class="b" style="left:54px;top:472.9px;width:7.60px;height:7.60px;background:#fff;border:1px solid #d4d4d4;border-radius:2px;"></div>
<div class="b" style="left:75.6px;top:469.9px;width:49px;height:34px;background:#fff"><svg viewBox="0 0 48.6 34" width="48.6" height="34" style="position:absolute;left:0;top:0;display:block"><defs><radialGradient id="lw" cx="0.56" cy="0.40" r="0.60"><stop offset="0" stop-color="#d9a9d6"/><stop offset="0.22" stop-color="#a96cae"/><stop offset="0.55" stop-color="#5d3f8c"/><stop offset="0.85" stop-color="#2b2562"/><stop offset="1" stop-color="#1a1a48"/></radialGradient><linearGradient id="lb" x1="0" y1="0" x2="1" y2="0.3"><stop offset="0" stop-color="#a2a4a8"/><stop offset="0.5" stop-color="#d6d7d9"/><stop offset="1" stop-color="#e6e6e7"/></linearGradient><linearGradient id="lg" x1="0" y1="0" x2="0" y2="1"><stop offset="0.7" stop-color="#4a6aa8" stop-opacity="0"/><stop offset="0.85" stop-color="#6b7fc0" stop-opacity="0.55"/><stop offset="1" stop-color="#3a4a80" stop-opacity="0.5"/></linearGradient><filter id="lf" x="-5%" y="-5%" width="110%" height="110%"><feGaussianBlur stdDeviation="0.38"/></filter></defs><g filter="url(#lf)"><path d="M5.700 25.500 23.400 31.100 46.800 26.800 46.800 26 23.300 30.200 5.700 24.600z" fill="#8d8f93"/><path d="M5.700 24.700 23.300 30.200 46.800 26 30.200 22.300z" fill="url(#lb)"/><path d="M10.500 24.500 29.600 22.500 38.500 24.500 21.500 27.300z" fill="#4e5056" opacity="0.8"/><path d="M1.200 3.600 26 3.900 30.100 22.300 5.700 24.900z" fill="#15151b"/><path d="M2.700 5.100 25 5.300 28.600 21.400 6.600 23.600z" fill="url(#lw)"/><path d="M2.700 5.100 25 5.300 28.600 21.400 6.600 23.600z" fill="url(#lg)"/></g></svg>
</div>
<span class="t " style="left:159px;top:469.90px;font-size:8.9px;color:#6790be;font-weight:400;">1029807931</span>
<span class="t " style="left:226.6px;top:469.90px;font-size:9.1px;color:#6790be;font-weight:400;letter-spacing:0.055px;">4c2c77b7-340b-3a4b-98b6-ce9b1914f4c1</span>
<span class="t " style="left:419.6px;top:469.90px;font-size:8.75px;color:#6790be;font-weight:400;">Macbook Pro 13&quot;</span>
<span class="t " style="left:498.6px;top:469.90px;font-size:8.75px;color:#6790be;font-weight:400;">Laptops</span>
<div class="b" style="left:564.3px;top:473.3px;width:7.00px;height:7.00px;background:#3f9b4f;border-radius:50%;"></div>
<span class="t " style="left:574px;top:469.90px;font-size:8.75px;color:#6790be;font-weight:400;">Ready to Deploy</span>
<div class="b" style="left:743.8px;top:469.9px;width:58.40px;height:19.60px;background:#c3375d;border-radius:3px;"></div>
<span class="t c" style="left:743.8px;width:58.40px;top:472.70px;font-size:8.1px;color:#f6dbe3;font-weight:400;">Checkout</span>
<div class="b" style="left:834px;top:469.9px;width:22.10px;height:19.60px;background:#55b4e4;border-radius:3px;"></div>
<svg class="ic" viewBox="0 0 16 16" style="left:840.75px;top:475.40px;width:8.6px;height:8.6px;color:#ffffff;"><g fill="none" stroke="currentColor" stroke-width="1.250" stroke-linejoin="round"><path d="M6.400 4V2.200c0-.4.300-.7.700-.7h4.200l3 3v6.300c0 .4-.3.700-.7.700H10"/><path d="M2.400 4.600h4.400l3.200 3.200v6c0 .4-.3.700-.7.700H2.400c-.4 0-.7-.3-.7-.7V5.300c0-.4.300-.7.700-.7z"/><path d="M6.600 4.800V8h3.200" stroke-width="1"/></g></svg>
<div class="b" style="left:858.3px;top:469.9px;width:21.30px;height:19.60px;background:#e29c3d;border-radius:3px;"></div>
<svg class="ic" viewBox="0 0 16 16" style="left:865.05px;top:475.80px;width:7.8px;height:7.8px;color:#ffffff;"><path d="M11.600 1.600c.4-.4 1-.4 1.400 0l1.400 1.400c.4.400.4 1 0 1.400L13 5.800 10.200 3zM9.300 3.900l2.800 2.800-7.300 7.300-3.600.8.800-3.600z"/></svg>
<div class="b" style="left:881.9px;top:469.9px;width:20.60px;height:19.60px;background:#c7573a;border-radius:3px;"></div>
<svg class="ic" viewBox="0 0 16 16" style="left:888.30px;top:475.80px;width:7.8px;height:7.8px;color:#ffffff;"><path d="M6 1h4l.6 1.200H14v1.600H2V2.200h3.400zM3 4.800h10l-.7 9.400c0 .5-.4.800-.9.800H4.600c-.5 0-.9-.3-.9-.8zm2.300 1.700.3 6.400h1.200l-.2-6.400zm2.100 0v6.400h1.200V6.500zm2.100 0-.2 6.400h1.200l.3-6.400z" fill-rule="evenodd"/></svg>
<div class="b" style="left:46.5px;top:507.8px;width:865.50px;height:0.70px;background:#f5f5f5;"></div>
<div class="b" style="left:54px;top:516.5px;width:7.60px;height:7.60px;background:#fff;border:1px solid #d4d4d4;border-radius:2px;"></div>
<div class="b" style="left:75.6px;top:513.5px;width:49px;height:34px;background:#fff"><svg viewBox="0 0 48.6 34" width="48.6" height="34" style="position:absolute;left:0;top:0;display:block"><defs><radialGradient id="lw" cx="0.56" cy="0.40" r="0.60"><stop offset="0" stop-color="#d9a9d6"/><stop offset="0.22" stop-color="#a96cae"/><stop offset="0.55" stop-color="#5d3f8c"/><stop offset="0.85" stop-color="#2b2562"/><stop offset="1" stop-color="#1a1a48"/></radialGradient><linearGradient id="lb" x1="0" y1="0" x2="1" y2="0.3"><stop offset="0" stop-color="#a2a4a8"/><stop offset="0.5" stop-color="#d6d7d9"/><stop offset="1" stop-color="#e6e6e7"/></linearGradient><linearGradient id="lg" x1="0" y1="0" x2="0" y2="1"><stop offset="0.7" stop-color="#4a6aa8" stop-opacity="0"/><stop offset="0.85" stop-color="#6b7fc0" stop-opacity="0.55"/><stop offset="1" stop-color="#3a4a80" stop-opacity="0.5"/></linearGradient><filter id="lf" x="-5%" y="-5%" width="110%" height="110%"><feGaussianBlur stdDeviation="0.38"/></filter></defs><g filter="url(#lf)"><path d="M5.700 25.500 23.400 31.100 46.800 26.800 46.800 26 23.300 30.200 5.700 24.600z" fill="#8d8f93"/><path d="M5.700 24.700 23.300 30.200 46.800 26 30.200 22.300z" fill="url(#lb)"/><path d="M10.500 24.500 29.600 22.500 38.500 24.500 21.500 27.300z" fill="#4e5056" opacity="0.8"/><path d="M1.200 3.600 26 3.900 30.100 22.300 5.700 24.900z" fill="#15151b"/><path d="M2.700 5.100 25 5.300 28.600 21.400 6.600 23.600z" fill="url(#lw)"/><path d="M2.700 5.100 25 5.300 28.600 21.400 6.600 23.600z" fill="url(#lg)"/></g></svg>
</div>
<span class="t " style="left:159px;top:512.90px;font-size:8.9px;color:#6790be;font-weight:400;">913496222</span>
<span class="t " style="left:226.6px;top:512.90px;font-size:9.1px;color:#6790be;font-weight:400;letter-spacing:0.041px;">f38c6b03-083a-3cb1-b3e5-752e0828b56a</span>
<span class="t " style="left:419.6px;top:512.90px;font-size:8.75px;color:#6790be;font-weight:400;">Macbook Pro 13&quot;</span>
<span class="t " style="left:498.6px;top:512.90px;font-size:8.75px;color:#6790be;font-weight:400;">Laptops</span>
<div class="b" style="left:564.3px;top:516.3px;width:7.00px;height:7.00px;background:#3a6db0;border-radius:50%;"></div>
<span class="t " style="left:574px;top:512.90px;font-size:8.75px;color:#6790be;font-weight:400;">Deployed</span>
<svg class="ic" viewBox="0 0 16 16" style="left:649.40px;top:515.20px;width:8.6px;height:8.6px;color:#3f71b2;"><path d="M8 1a3.600 3.600 0 1 1 0 7.200A3.600 3.600 0 0 1 8 1zM2 14.200c0-3.400 1.500-5.600 3.600-5.800.7.500 1.500.8 2.400.8s1.700-.3 2.400-.8c2.100.2 3.600 2.400 3.600 5.800 0 .5-.4.800-.8.800H2.800c-.4 0-.8-.3-.8-.8z"/></svg>
<span class="t " style="left:659.8px;top:512.90px;font-size:8.7px;color:#6790be;font-weight:400;">Johnson Wintheiser</span>
<div class="b" style="left:743.8px;top:513.5px;width:58.40px;height:19.60px;background:#5558a6;border-radius:3px;"></div>
<span class="t c" style="left:743.8px;width:58.40px;top:516.30px;font-size:8.2px;color:#e2e2f3;font-weight:400;">Checkin</span>
<div class="b" style="left:834px;top:513.5px;width:22.10px;height:19.60px;background:#55b4e4;border-radius:3px;"></div>
<svg class="ic" viewBox="0 0 16 16" style="left:840.75px;top:519.00px;width:8.6px;height:8.6px;color:#ffffff;"><g fill="none" stroke="currentColor" stroke-width="1.250" stroke-linejoin="round"><path d="M6.400 4V2.200c0-.4.300-.7.700-.7h4.200l3 3v6.300c0 .4-.3.700-.7.700H10"/><path d="M2.400 4.600h4.400l3.200 3.200v6c0 .4-.3.700-.7.700H2.400c-.4 0-.7-.3-.7-.7V5.300c0-.4.300-.7.700-.7z"/><path d="M6.600 4.800V8h3.200" stroke-width="1"/></g></svg>
<div class="b" style="left:858.3px;top:513.5px;width:21.30px;height:19.60px;background:#e29c3d;border-radius:3px;"></div>
<svg class="ic" viewBox="0 0 16 16" style="left:865.05px;top:519.40px;width:7.8px;height:7.8px;color:#ffffff;"><path d="M11.600 1.600c.4-.4 1-.4 1.400 0l1.400 1.400c.4.400.4 1 0 1.400L13 5.800 10.200 3zM9.300 3.900l2.800 2.800-7.300 7.300-3.600.8.800-3.600z"/></svg>
<div class="b" style="left:881.9px;top:513.5px;width:20.60px;height:19.60px;background:#c7573a;border-radius:3px;"></div>
<svg class="ic" viewBox="0 0 16 16" style="left:888.30px;top:519.40px;width:7.8px;height:7.8px;color:#ffffff;"><path d="M6 1h4l.6 1.200H14v1.600H2V2.200h3.400zM3 4.800h10l-.7 9.400c0 .5-.4.800-.9.800H4.600c-.5 0-.9-.3-.9-.8zm2.300 1.700.3 6.400h1.200l-.2-6.400zm2.100 0v6.400h1.200V6.500zm2.100 0-.2 6.400h1.200l.3-6.400z" fill-rule="evenodd"/></svg>
</div></body></html>
